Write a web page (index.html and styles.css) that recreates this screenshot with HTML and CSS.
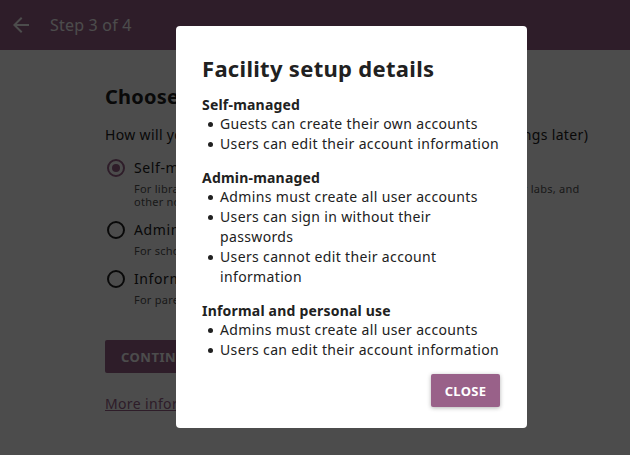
FILE: index.html
```html
<!DOCTYPE html>
<html lang="en">
<head>
<meta charset="utf-8">
<link rel="stylesheet" href="styles.css">
</head>
<body>
<header class="appbar">
  <svg class="back" width="24" height="24" viewBox="0 0 24 24"><path d="M20 11H7.83l5.59-5.59L12 4l-8 8 8 8 1.41-1.41L7.83 13H20v-2z" fill="#fff"/></svg>
  <span class="step">Step 3 of 4</span>
</header>
<main class="page">
  <h1 class="heading">Choose a Facility setup</h1>
  <p class="question">How will you be using Kolibri? (You can customize these settings later)</p>
  <div class="options">
    <div class="option">
      <span class="radio checked"></span>
      <div class="opt-text">
        <div class="opt-label">Self-managed</div>
        <div class="opt-desc">For libraries, orphanages, correctional facilities, youth centers, computer labs, and other non-formal learning environments</div>
      </div>
    </div>
    <div class="option">
      <span class="radio"></span>
      <div class="opt-text">
        <div class="opt-label">Admin-managed</div>
        <div class="opt-desc">For schools and other formal learning environments</div>
      </div>
    </div>
    <div class="option">
      <span class="radio"></span>
      <div class="opt-text">
        <div class="opt-label">Informal and personal use</div>
        <div class="opt-desc">For parent-child learning, homeschooling, or supplementary learning</div>
      </div>
    </div>
  </div>
  <button class="continue">CONTINUE</button>
  <a class="more" href="#">More information about these settings</a>
</main>
<div class="overlay">
  <div class="modal">
    <h2 class="modal-title">Facility setup details</h2>
    <section class="sec">
      <h3 class="sec-title">Self-managed</h3>
      <ul class="list">
        <li>Guests can create their own accounts</li>
        <li>Users can edit their account information</li>
      </ul>
    </section>
    <section class="sec">
      <h3 class="sec-title">Admin-managed</h3>
      <ul class="list">
        <li>Admins must create all user accounts</li>
        <li>Users can sign in without their passwords</li>
        <li>Users cannot edit their account information</li>
      </ul>
    </section>
    <section class="sec">
      <h3 class="sec-title">Informal and personal use</h3>
      <ul class="list">
        <li>Admins must create all user accounts</li>
        <li>Users can edit their account information</li>
      </ul>
    </section>
    <div class="actions">
      <button class="close">CLOSE</button>
    </div>
  </div>
</div>
</body>
</html>
```
FILE: styles.css
```css
* { box-sizing: border-box; }
html, body { margin: 0; padding: 0; }
body {
  font-family: "Noto Sans", "Open Sans", sans-serif;
  color: #212121;
  background: #fff;
  width: 630px;
  height: 455px;
  overflow: hidden;
  position: relative;
  letter-spacing: 0.35px;
}
.appbar {
  height: 50px;
  background: #996189;
  display: flex;
  align-items: center;
  padding-left: 9px;
  color: #fff;
}
.back { margin-right: 17px; }
.step { font-size: 16px; letter-spacing: 0.2px; }
.page {
  padding: 33px 0 0 105px;
  width: 600px;
}
.heading {
  margin: 0;
  font-size: 20px;
  font-weight: 700;
  line-height: 27px;
  letter-spacing: 0.2px;
}
.question {
  margin: 15px 0 0;
  font-size: 14px;
  line-height: 20px;
  white-space: nowrap;
}
.options { margin-top: 13px; }
.option {
  display: flex;
  align-items: flex-start;
  margin-bottom: 12px;
}
.radio {
  width: 18px;
  height: 18px;
  border: 2px solid #212121;
  border-radius: 50%;
  margin: 1px 9px 0 2px;
  flex: none;
  position: relative;
}
.radio.checked { border-color: #996189; }
.radio.checked::after {
  content: "";
  position: absolute;
  left: 3px; top: 3px;
  width: 8px; height: 8px;
  border-radius: 50%;
  background: #996189;
}
.opt-label { font-size: 14px; line-height: 20px; letter-spacing: 0.6px; }
.opt-desc { font-size: 11px; line-height: 13px; color: #555; margin-top: 4px; letter-spacing: 0.25px; width: 455px; }
.continue {
  margin-top: 34px;
  height: 33px;
  padding: 0 16px;
  border: 0;
  border-radius: 2px;
  background: #996189;
  color: #fff;
  font-family: inherit;
  font-weight: 700;
  font-size: 13px;
  letter-spacing: 0.5px;
  display: block;
}
.more {
  display: inline-block;
  margin-top: 21px;
  font-size: 14px;
  color: #996189;
}
.overlay {
  position: absolute;
  inset: 0;
  background: rgba(0,0,0,0.7);
  display: flex;
  align-items: flex-start;
  padding: 26px 0 0 176px;
}
.modal {
  width: 351px;
  height: 402px;
  background: #fff;
  border-radius: 4px;
  padding: 27px 27px 0 26px;
  color: #212121;
}
.modal-title {
  margin: 0 0 12px;
  font-size: 22px;
  font-weight: 700;
  line-height: 30px;
  letter-spacing: 0.3px;
}
.sec { margin-bottom: 14px; }
.sec-title {
  margin: 0;
  font-size: 14px;
  font-weight: 700;
  line-height: 19px;
  letter-spacing: 0.2px;
}
.list {
  margin: 0;
  padding: 0;
  list-style: none;
  font-size: 14px;
  line-height: 20px;
}
.list li {
  position: relative;
  padding-left: 18px;
}
.list li::before {
  content: "";
  position: absolute;
  left: 6px;
  top: 8px;
  width: 5px;
  height: 5px;
  border-radius: 50%;
  background: #212121;
}
.actions {
  display: flex;
  justify-content: flex-end;
}
.close {
  width: 69px;
  height: 33px;
  border: 0;
  border-radius: 2px;
  background: #996189;
  color: #fff;
  font-family: inherit;
  font-weight: 700;
  font-size: 13px;
  letter-spacing: 0.3px;
  box-shadow: 0 1px 4px rgba(0,0,0,0.3);
}
```
